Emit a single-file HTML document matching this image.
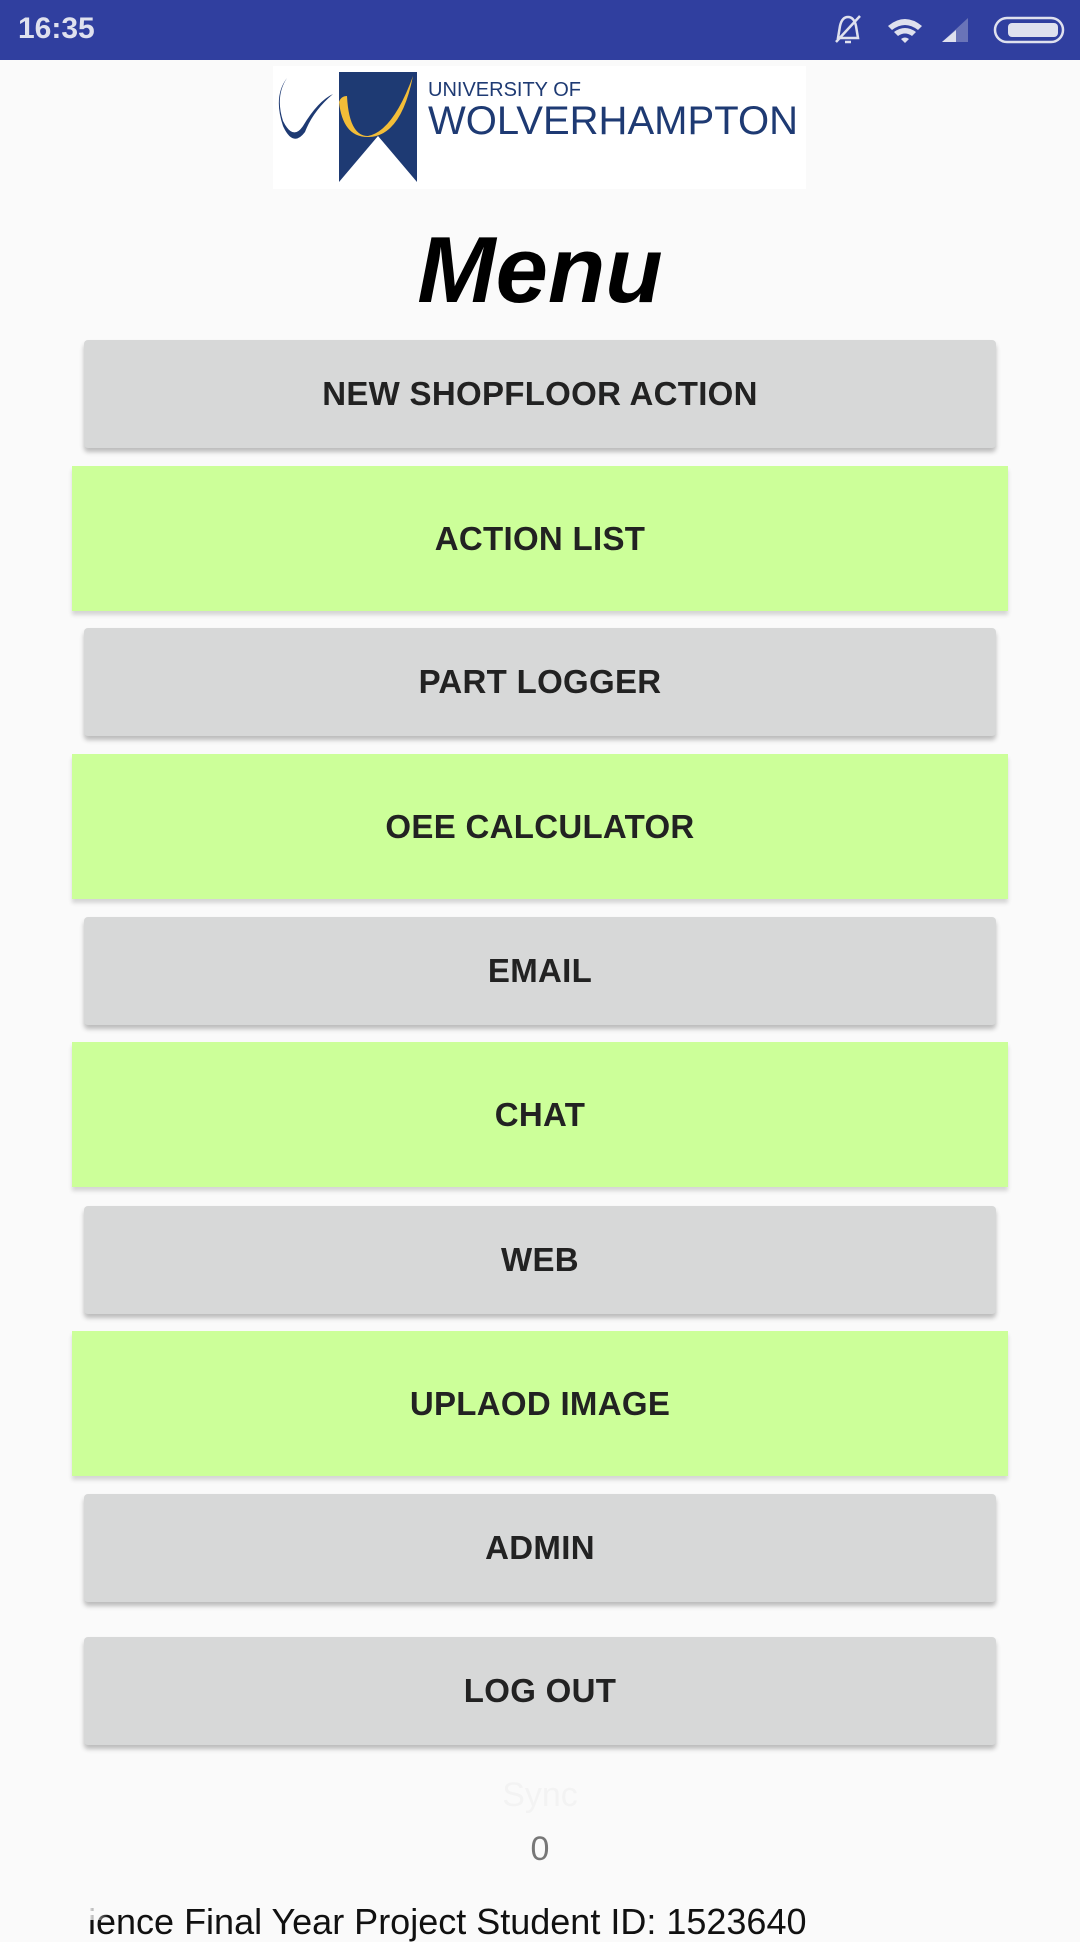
<!DOCTYPE html>
<html><head><meta charset="utf-8"><style>
*{margin:0;padding:0;box-sizing:border-box}
body{width:1080px;height:1920px;background:#fafafa;font-family:"Liberation Sans",sans-serif;position:relative;overflow:hidden}
.sb{position:absolute;left:0;top:0;width:1080px;height:60px;background:#303f9f}
.time{position:absolute;left:18px;top:12px;color:#dfe1ee;font-size:30px;font-weight:bold}
.logo{position:absolute;left:273px;top:66px;width:533px;height:123px;background:#fff}
.title{position:absolute;left:0;width:1080px;top:216px;text-align:center;font-size:94px;font-weight:bold;font-style:italic;color:#000}
.b{position:absolute;display:flex;align-items:center;justify-content:center;font-size:33px;font-weight:bold;color:#222;letter-spacing:0.3px}
.g{left:84px;width:912px;height:108px;background:#d7d8d8;border-radius:4px;box-shadow:0 4px 5px rgba(0,0,0,0.25)}
.gr{left:72px;width:936px;height:145px;background:#ccff99;box-shadow:0 4px 4px rgba(0,0,0,0.15)}
</style></head><body>
<div class="sb"><div class="time">16:35</div>
<svg style="position:absolute;left:830px;top:12px" width="240" height="36" viewBox="0 0 240 36">
<g fill="none" stroke="#dfe1ee" stroke-width="2.5"><path d="M8 26 L10 14 Q12 5 18 5 Q24 5 26 14 L28 26 Z"/><path d="M6 30 L30 4"/><path d="M15 30 h6"/></g>
<path d="M58 14 Q75 0 92 14 L88 18 Q75 8 62 18Z M64 20 Q75 12 86 20 L82 24 Q75 19 68 24Z M71 27 L75 31 L79 27 Q75 24 71 27Z" fill="#dfe1ee"/>
<path d="M112 30 L138 6 L138 30Z" fill="#6a74b8"/><path d="M112 30 L126 30 L126 18Z" fill="#dfe1ee"/>
<rect x="165" y="6" width="68" height="24" rx="12" fill="none" stroke="#dfe1ee" stroke-width="2.5"/><rect x="178" y="11" width="50" height="14" rx="4" fill="#dfe1ee"/>
</svg></div>
<div class="logo"><svg width="533" height="123" viewBox="0 0 533 123">
<path d="M66 6 L144 6 L144 116 L105 70 L66 116Z" fill="#1e3a73"/>
<path d="M14 12 Q2 30 10 55 Q20 75 30 60 Q45 35 60 28 Q40 45 32 66 Q20 82 10 60 Q0 30 14 12Z" fill="#1e3a73"/>
<path d="M74 30 Q76 70 95 70 Q120 65 140 10 Q128 70 96 71 Q70 72 66 36 Q68 30 74 30Z" fill="#f3bd38"/>
<text x="155" y="30" font-family="Liberation Sans" font-size="20" fill="#1e3a73">UNIVERSITY OF</text>
<text x="155" y="68" font-family="Liberation Sans" font-size="40" fill="#1e3a73" textLength="370">WOLVERHAMPTON</text>
</svg></div>
<div class="title">Menu</div>
<div class="b g" style="top:340px">NEW SHOPFLOOR ACTION</div>
<div class="b gr" style="top:466px">ACTION LIST</div>
<div class="b g" style="top:628px">PART LOGGER</div>
<div class="b gr" style="top:754px">OEE CALCULATOR</div>
<div class="b g" style="top:917px">EMAIL</div>
<div class="b gr" style="top:1042px">CHAT</div>
<div class="b g" style="top:1206px">WEB</div>
<div class="b gr" style="top:1331px">UPLAOD IMAGE</div>
<div class="b g" style="top:1494px">ADMIN</div>
<div class="b g" style="top:1637px">LOG OUT</div>
<div style="position:absolute;left:0;width:1080px;top:1776px;text-align:center;font-size:34px;color:#f3f3f3">Sync</div>
<div style="position:absolute;left:0;width:1080px;top:1830px;text-align:center;font-size:34px;color:#777">0</div>
<div style="position:absolute;left:88px;top:1904px;font-size:36px;line-height:1;color:#111;white-space:nowrap">ience Final Year Project Student ID: 1523640</div>
<div style="position:absolute;left:82px;top:1895px;width:26px;height:25px;background:linear-gradient(to right,#fafafa 20%,rgba(250,250,250,0))"></div>
</body></html>
